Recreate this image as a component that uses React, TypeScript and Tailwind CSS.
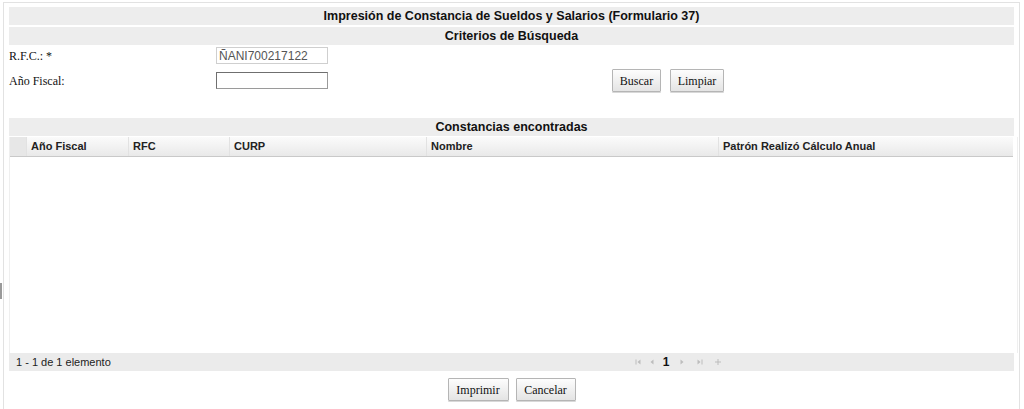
import React from "react";

const arial = { fontFamily: '"Liberation Sans", Arial, sans-serif' };
const times = { fontFamily: '"Liberation Serif", "Times New Roman", serif' };

function Btn({ children, w }: { children: React.ReactNode; w: string }) {
  return (
    <button
      className={`h-[23px] ${w} border border-[#b5b5b5] bg-gradient-to-b from-[#fdfdfd] to-[#e4e4e4] text-[12px] text-[#111] rounded-[1px] shadow-[0_1px_0_#d8d8d8] leading-none`}
      style={times}
    >
      {children}
    </button>
  );
}

function PagerIcon({ d, w }: { d: string; w: string }) {
  return (
    <span className={`${w} flex justify-center`}>
      <svg width="8" height="8" viewBox="0 0 8 8" className="text-[#bdbdbd]">
        <path d={d} fill="currentColor" />
      </svg>
    </span>
  );
}

export default function App() {
  const cols = [
    { label: "", w: "w-[16px]", first: true },
    { label: "Año Fiscal", w: "w-[102px]" },
    { label: "RFC", w: "w-[101px]" },
    { label: "CURP", w: "w-[197px]" },
    { label: "Nombre", w: "w-[292px]" },
    { label: "Patrón Realizó Cálculo Anual", w: "flex-1" },
  ];
  return (
    <div className="w-[1024px] h-[409px] bg-white relative overflow-hidden">
      <div className="absolute left-0 top-[283px] w-[2px] h-[16px] bg-[#9a9a9a]" />
      <div className="ml-[3px] mt-[2px] w-[1017px] h-[407px] border-l border-t border-r border-[#e2e2e2] px-[5px] pt-[4px] flex flex-col">
        <div
          className="h-[18px] bg-[#ededed] flex items-center justify-center text-[12.5px] font-bold text-[#111]"
          style={arial}
        >
          Impresión de Constancia de Sueldos y Salarios (Formulario 37)
        </div>
        <div
          className="h-[18px] mt-[2px] bg-[#ededed] flex items-center justify-center text-[12.5px] font-bold text-[#111]"
          style={arial}
        >
          Criterios de Búsqueda
        </div>

        <div className="flex items-center mt-[2px] h-[17px]">
          <div className="w-[207px] text-[12px] text-[#111]" style={times}>
            R.F.C.: *
          </div>
          <div
            className="w-[112px] h-[17px] border border-[#cfcfcf] bg-white flex items-center pl-[2px] text-[12px] text-[#555]"
            style={arial}
          >
            ÑANI700217122
          </div>
        </div>

        <div className="flex items-center mt-[5px] h-[23px]">
          <div className="w-[207px] text-[12px] text-[#111]" style={times}>
            Año Fiscal:
          </div>
          <div className="w-[112px] h-[17px] border border-[#9a9a9a] border-t-[#6f6f6f] border-l-[#6f6f6f] bg-white" />
          <div className="ml-[284px] flex gap-[9px]">
            <Btn w="w-[49px]">Buscar</Btn>
            <Btn w="w-[54px]">Limpiar</Btn>
          </div>
        </div>

        <div
          className="h-[18px] mt-[26px] bg-[#ededed] flex items-center justify-center text-[12.5px] font-bold text-[#111]"
          style={arial}
        >
          Constancias encontradas
        </div>

        <div className="mt-[1px] h-[216px] flex flex-col border-r border-l border-[#efefef] mr-[-4px]">
          <div className="h-[20px] flex border-b border-[#c9c9c9] bg-gradient-to-b from-[#fbfbfb] to-[#e9e9e9] mr-[4px]">
            {cols.map((c, i) => (
              <div
                key={i}
                className={`${c.w} h-full flex items-center pl-[4px] text-[11px] font-bold text-[#222] ${
                  c.first ? "bg-[#e7e7e7]" : "border-l border-[#e2e2e2]"
                }`}
                style={arial}
              >
                {c.label}
              </div>
            ))}
          </div>
          <div className="flex-1 bg-white" />
        </div>

        <div
          className="h-[18px] bg-[#ebebeb] flex items-center relative text-[11px] text-[#222]"
          style={arial}
        >
          <span className="pl-[7px]">1 - 1 de 1 elemento</span>
          <div className="absolute left-[622px] top-0 h-full flex items-center">
            <PagerIcon w="w-[14px]" d="M1.5 1.5h1v5h-1z M6.5 1.5v5L3.5 4z" />
            <PagerIcon w="w-[14px]" d="M5.5 1.5v5L2.5 4z" />
            <span className="w-[14px] flex justify-center font-bold text-[12px] text-[#111]">1</span>
            <PagerIcon w="w-[18px]" d="M2.5 1.5v5L5.5 4z" />
            <PagerIcon w="w-[18px]" d="M1.5 1.5v5L4.5 4z M5.5 1.5h1v5h-1z" />
            <PagerIcon w="w-[18px]" d="M3.5 1h1v2.5H7v1H4.5V7h-1V4.5H1v-1h2.5z" />
          </div>
        </div>

        <div className="flex justify-center gap-[7px] mt-[7px]">
          <Btn w="w-[61px]">Imprimir</Btn>
          <Btn w="w-[60px]">Cancelar</Btn>
        </div>
      </div>
    </div>
  );
}
